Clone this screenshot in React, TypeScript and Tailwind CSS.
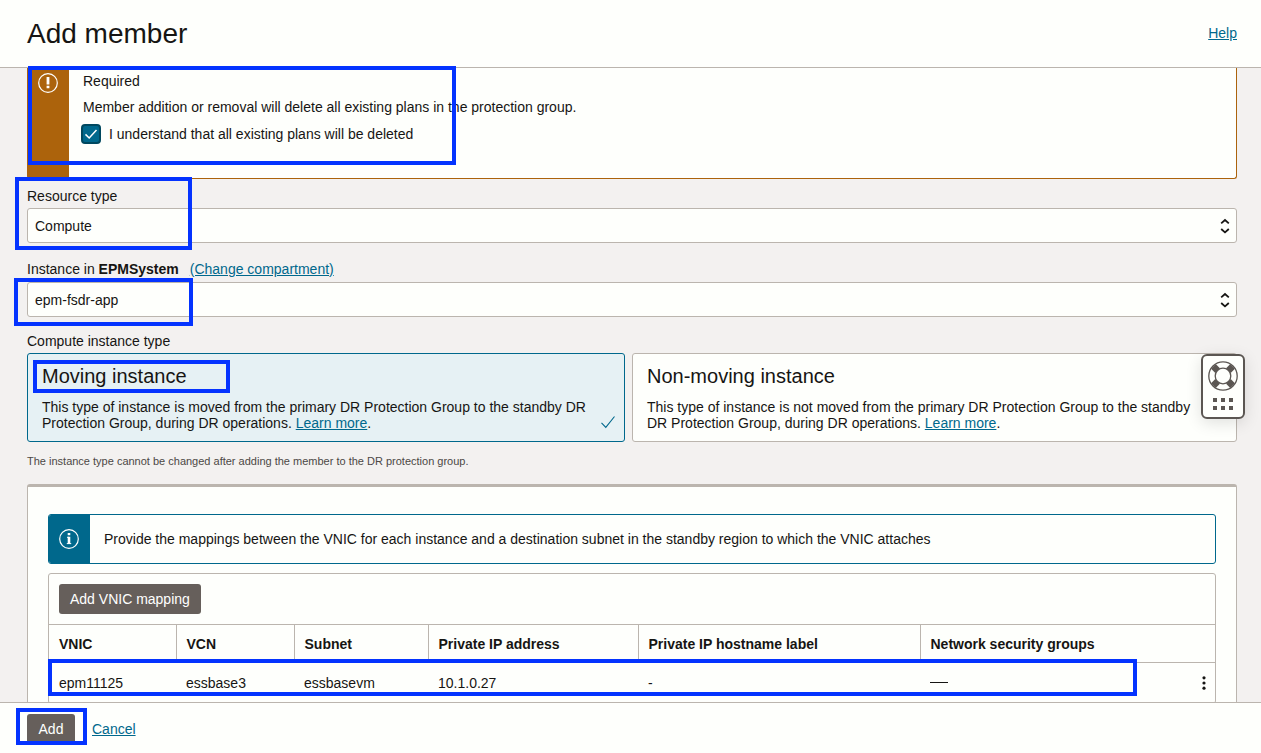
import React, { useState } from 'react';

interface HighlightProps {
  className: string;
}

// Blue frame drawn over the part of the form it belongs to
function Highlight({ className }: HighlightProps) {
  return (
    <div
      aria-hidden="true"
      className={`pointer-events-none absolute z-20 border-4 border-[#0433ff] ${className}`}
    />
  );
}

interface SelectFieldProps {
  id: string;
  options: string[];
}

function SelectField({ id, options }: SelectFieldProps) {
  return (
    <div className="relative">
      <select
        id={id}
        className="block h-[35px] w-full appearance-none rounded-[3px] border border-[#bbb5ae] bg-[#fefffc] pr-8 pl-[7px] text-sm text-[#161513]"
      >
        {options.map((option) => (
          <option key={option}>{option}</option>
        ))}
      </select>
      <svg
        className="pointer-events-none absolute top-[9px] right-[6px]"
        width="12"
        height="18"
        viewBox="0 0 12 18"
        fill="none"
        stroke="#161513"
        strokeWidth="1.8"
      >
        <path d="M2.2 6.4 6 3l3.8 3.4M2.2 12 6 15.4l3.8-3.4" />
      </svg>
    </div>
  );
}

interface InstanceCardProps {
  title: string;
  description: string;
  checked: boolean;
  onChange: () => void;
  children?: React.ReactNode;
}

function InstanceCard({ title, description, checked, onChange, children }: InstanceCardProps) {
  return (
    <label
      className={`relative block rounded-[3px] border px-[14px] py-[10px] ${
        checked ? 'border-[#00688c] bg-[#e6f1f4]' : 'border-[#bbb5ae] bg-[#fefffc]'
      }`}
    >
      <input
        type="radio"
        name="instance-type"
        checked={checked}
        onChange={onChange}
        className="sr-only"
      />
      <span className="block text-xl leading-6">{title}</span>
      <span className="mt-[11px] block pr-4 text-sm leading-4">
        {description}{' '}
        <a href="#learn-more" className="text-[#00688c] underline">
          Learn more
        </a>
        .
      </span>
      {checked && (
        <svg
          className="absolute right-[8px] bottom-[12px]"
          width="16"
          height="14"
          viewBox="0 0 16 14"
          fill="none"
          stroke="#00688c"
          strokeWidth="1.1"
        >
          <path d="M1.5 7.8 5.8 12.3 14.5 1.5" />
        </svg>
      )}
      {children}
    </label>
  );
}

function LifebuoyIcon() {
  return (
    <svg width="32" height="32" viewBox="0 0 32 32" fill="none" stroke="#5b5652">
      <circle cx="16" cy="16" r="14.2" strokeWidth="1.3" />
      <circle cx="16" cy="16" r="7.8" strokeWidth="1.3" />
      <g strokeWidth="6.6">
        <path d="M6.4 6.4l4.2 4.2M25.6 6.4l-4.2 4.2M6.4 25.6l4.2-4.2M25.6 25.6l-4.2-4.2" />
      </g>
    </svg>
  );
}

const columns = [
  { label: 'VNIC', width: 'w-[127px]' },
  { label: 'VCN', width: 'w-[118px]' },
  { label: 'Subnet', width: 'w-[134px]' },
  { label: 'Private IP address', width: 'w-[210px]' },
  { label: 'Private IP hostname label', width: 'w-[282px]' },
];

const rows = [['epm11125', 'essbase3', 'essbasevm', '10.1.0.27', '-']];

export default function App() {
  const [understood, setUnderstood] = useState(true);
  const [instanceType, setInstanceType] = useState('moving');

  return (
    <div className="flex h-screen flex-col overflow-hidden bg-[#f3f1f0] font-['Liberation_Sans',Arial,sans-serif] text-sm text-[#161513]">
      <header className="flex h-[68px] shrink-0 items-center justify-between border-b border-[#bbb5ae] bg-[#fefffc] pr-6 pl-[27px]">
        <h1 className="text-[28px] leading-8">Add member</h1>
        <a href="#help" className="pb-[2px] text-[#00688c] underline">
          Help
        </a>
      </header>

      <main className="min-h-0 flex-1 pr-6 pl-[27px]">
        {/* Warning */}
        <section className="relative flex h-[111px] rounded-b-[3px] border border-t-0 border-[#ac630c] bg-[#fefffc]">
          <div className="w-[41px] shrink-0 bg-[#ac630c] pt-[5px] pl-[10px]">
            <svg width="20" height="20" viewBox="0 0 20 20" fill="none" stroke="#fff">
              <circle cx="10" cy="10" r="9.3" strokeWidth="1.2" />
              <path d="M10 4v7.4M10 12.8v2.4" strokeWidth="2.8" />
            </svg>
          </div>
          <div className="pt-[3px] pl-[14px]">
            <p className="leading-5">Required</p>
            <p className="mt-[6px] leading-5">
              Member addition or removal will delete all existing plans in the protection group.
            </p>
            <label className="mt-[7px] flex items-center gap-2 leading-5">
              <span className="relative -ml-[2px] block size-5">
                <input
                  type="checkbox"
                  checked={understood}
                  onChange={(e) => setUnderstood(e.target.checked)}
                  className="block size-5 appearance-none rounded-[4px] border-2 border-[#00485f] bg-white checked:bg-[#00688c]"
                />
                {understood && (
                  <svg
                    className="pointer-events-none absolute inset-0"
                    width="20"
                    height="20"
                    viewBox="0 0 20 20"
                    fill="none"
                    stroke="#fff"
                    strokeWidth="1.5"
                  >
                    <path d="M4.5 10.4 8.2 14 15.5 6" />
                  </svg>
                )}
              </span>
              I understand that all existing plans will be deleted
            </label>
          </div>
          <Highlight className="-top-[2px] left-0 h-[99px] w-[428px]" />
        </section>

        {/* Resource type */}
        <section className="relative mt-[7px]">
          <label htmlFor="resource-type" className="mb-[2px] block leading-5">
            Resource type
          </label>
          <SelectField id="resource-type" options={['Compute']} />
          <Highlight className="-top-[9px] -left-3 h-[73px] w-[177px]" />
        </section>

        {/* Instance */}
        <section className="relative mt-4">
          <div className="mb-[3px] flex gap-[11px] leading-5">
            <label htmlFor="instance">
              Instance in <b>EPMSystem</b>
            </label>
            <a href="#compartment" className="text-[#00688c] underline">
              (Change compartment)
            </a>
          </div>
          <SelectField id="instance" options={['epm-fsdr-app']} />
          <Highlight className="top-[19px] -left-[13px] h-12 w-[179px]" />
        </section>

        {/* Instance type */}
        <fieldset className="mt-[14px]">
          <legend className="mb-[2px] leading-5">Compute instance type</legend>
          <div className="grid grid-cols-[598fr_605fr] gap-[7px]">
            <InstanceCard
              title="Moving instance"
              description="This type of instance is moved from the primary DR Protection Group to the standby DR Protection Group, during DR operations."
              checked={instanceType === 'moving'}
              onChange={() => setInstanceType('moving')}
            >
              <Highlight className="top-[6px] left-[5px] h-[33px] w-[197px]" />
            </InstanceCard>
            <InstanceCard
              title="Non-moving instance"
              description="This type of instance is not moved from the primary DR Protection Group to the standby DR Protection Group, during DR operations."
              checked={instanceType === 'non-moving'}
              onChange={() => setInstanceType('non-moving')}
            />
          </div>
        </fieldset>
        <p className="mt-[11px] text-[11px] leading-4 text-[#4c4845]">
          The instance type cannot be changed after adding the member to the DR protection group.
        </p>

        {/* VNIC mapping */}
        <section className="mt-[15px] rounded-[3px] border border-t-[3px] border-[#bbb5ae] bg-[#fefffc] px-5 pt-[27px] pb-7">
          <div className="flex h-[50px] overflow-hidden rounded-[3px] border border-[#00688c]">
            <div className="flex w-[41px] shrink-0 items-center bg-[#00688c] pl-[10px]">
              <svg width="20" height="20" viewBox="0 0 20 20" fill="none" stroke="#fff">
                <circle cx="10" cy="10" r="9.3" strokeWidth="1.2" />
                <path d="M10 4v2.2M10 7.8v7" strokeWidth="2.6" />
                <path d="M8 8.3h2M7.8 14.6h4.4" strokeWidth="1" />
              </svg>
            </div>
            <p className="self-center pl-[14px]">
              Provide the mappings between the VNIC for each instance and a destination subnet in
              the standby region to which the VNIC attaches
            </p>
          </div>

          <div className="relative mt-[9px] rounded-[3px] border border-[#bbb5ae]">
            <div className="p-[10px]">
              <button
                type="button"
                className="block h-[30px] rounded-[3px] bg-[#665f5b] px-[11px] text-white"
              >
                Add VNIC mapping
              </button>
            </div>
            <table className="w-full table-fixed border-collapse text-left">
              <thead>
                <tr className="h-[38px] border-y border-[#bbb5ae]">
                  {columns.map((column) => (
                    <th
                      key={column.label}
                      className={`border-r border-[#bbb5ae] px-[10px] font-bold ${column.width}`}
                    >
                      {column.label}
                    </th>
                  ))}
                  <th className="px-[10px] font-bold">Network security groups</th>
                  <th className="w-[34px]" />
                </tr>
              </thead>
              <tbody>
                {rows.map((row) => (
                  <tr key={row[0]} className="h-10">
                    {row.map((cell) => (
                      <td key={cell} className="px-[10px]">
                        {cell}
                      </td>
                    ))}
                    <td className="px-[10px]">
                      <div className="h-px w-[18px] bg-[#161513]" />
                    </td>
                    <td>
                      <button type="button" aria-label="Actions" className="ml-auto block pr-2">
                        <svg width="6" height="16" viewBox="0 0 6 16" fill="#161513">
                          <circle cx="3" cy="2.8" r="1.6" />
                          <circle cx="3" cy="8" r="1.6" />
                          <circle cx="3" cy="13.2" r="1.6" />
                        </svg>
                      </button>
                    </td>
                  </tr>
                ))}
              </tbody>
            </table>
            <Highlight className="top-[85px] -left-px h-[37px] w-[1089px]" />
          </div>
        </section>
      </main>

      <footer className="relative z-10 flex h-[51px] shrink-0 items-start gap-[17px] border-t border-[#bbb5ae] bg-[#fefffc] pt-[11px] pl-[27px]">
        <button type="button" className="h-[30px] w-12 rounded-[3px] bg-[#665f5b] text-white">
          Add
        </button>
        <a href="#cancel" className="leading-[30px] text-[#00688c] underline">
          Cancel
        </a>
        <Highlight className="top-[5px] left-4 h-[37px] w-[71px]" />
      </footer>

      {/* Floating support widget */}
      <button
        type="button"
        aria-label="Support"
        className="fixed top-[354px] right-4 z-30 flex h-[65px] w-11 flex-col items-center rounded-md border-2 border-[#5b5652] bg-[#fefffc] pt-1 shadow-[0_4px_16px_rgba(0,0,0,0.12)]"
      >
        <LifebuoyIcon />
        <svg className="mt-[6px]" width="20" height="12" viewBox="0 0 20 12" fill="#5b5652">
          <path d="M0 0h4v4H0zM8 0h4v4H8zM16 0h4v4h-4zM0 8h4v4H0zM8 8h4v4H8zM16 8h4v4h-4z" />
        </svg>
      </button>
    </div>
  );
}
